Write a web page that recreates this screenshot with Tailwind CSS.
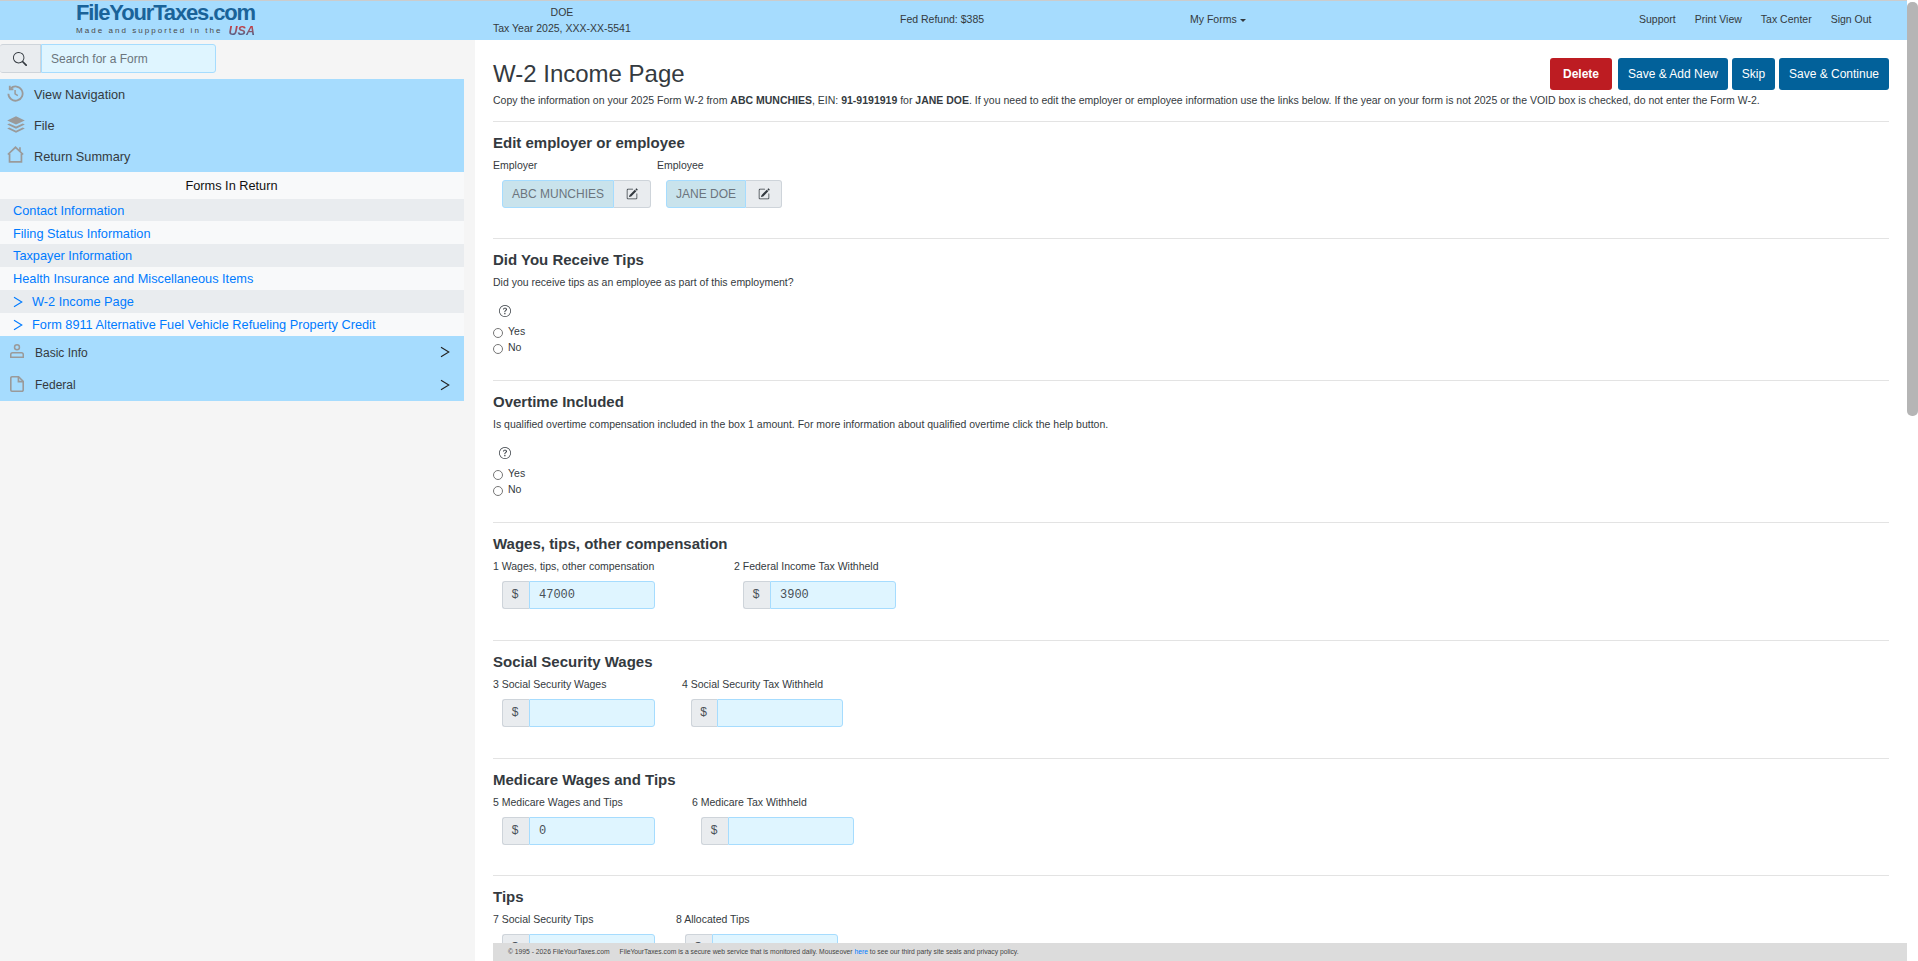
<!DOCTYPE html>
<html lang="en">
<head>
    <meta charset="UTF-8">
    <meta name="viewport" content="width=device-width, initial-scale=1.0">
    <title>W-2 Income Page - FileYourTaxes.com</title>
    <script src="https://cdn.jsdelivr.net/npm/@tailwindcss/browser@4"></script>
</head>
<body class="h-[961px] w-[1918px] overflow-hidden bg-white font-['Liberation_Sans',Arial,sans-serif] text-[#212529]">
<div class="relative flex h-full">
    <div class="flex w-[1907px] flex-col">
        <!-- top bar -->
        <header class="flex h-10 shrink-0 items-center border-t border-[#cccccc] bg-[#a6dcfe] text-[10.5px] text-[#343a40]">
            <div class="-mt-0.5 w-[493px] shrink-0 pl-[76px]">
                <div class="h-[22px] w-[180px] text-[22px] leading-[22px] font-bold tracking-[-1.15px] whitespace-nowrap text-[#1a6399]">FileYourTaxes.com</div>
                <div class="mt-px flex h-[12px] w-[180px] items-center justify-between text-[8px] leading-[12px] tracking-[2.05px] whitespace-nowrap text-[#4a4a4a]">
                    <span>Made and supported in the</span>
                    <span class="bg-linear-to-b from-[#d4202c] to-[#1a5f96] bg-clip-text pr-px text-[12.5px] leading-[12px] font-bold tracking-normal text-transparent italic">USA</span>
                </div>
            </div>
            <div class="-mt-0.5 w-[407px] shrink-0">
                <div class="w-[138px] text-center leading-[16px]">DOE</div>
                <div class="leading-[16px] whitespace-nowrap">Tax Year 2025, XXX-XX-5541</div>
            </div>
            <div class="-mt-px w-[290px] shrink-0">Fed Refund: $385</div>
            <div class="-mt-px flex w-[449px] shrink-0 items-center gap-[3px]">My Forms <span class="mt-px h-0 w-0 border-x-[3px] border-t-[3px] border-x-transparent border-t-[#343a40]"></span></div>
            <nav class="-mt-px flex gap-[19px] whitespace-nowrap">
                <span>Support</span><span>Print View</span><span>Tax Center</span><span>Sign Out</span>
            </nav>
        </header>

        <div class="flex min-h-0 flex-1">
            <!-- sidebar -->
            <aside class="w-[475px] shrink-0 bg-[#f5f5f5] pr-[11px]">
                <div class="mt-1 flex h-[29px] w-[216px] text-xs">
                    <div class="flex w-[41px] items-center justify-center rounded-l-[3px] border border-l-0 border-[#ced4da] bg-[#e9ecef]">
                        <svg class="h-[14px] w-[14px] text-[#343a40]" viewBox="0 0 16 16" fill="currentColor"><path d="M11.742 10.344a6.5 6.5 0 1 0-1.397 1.398h-.001c.03.04.062.078.098.115l3.85 3.85a1 1 0 0 0 1.415-1.414l-3.85-3.85a1.007 1.007 0 0 0-.115-.1zM12 6.5a5.5 5.5 0 1 1-11 0 5.5 5.5 0 0 1 11 0z"/></svg>
                    </div>
                    <input type="text" placeholder="Search for a Form" class="w-[175px] rounded-r-[3px] border border-[#a6dcfe] bg-[#dff5ff] px-[9px] text-[12px] outline-none placeholder:text-[#6c757d]">
                </div>

                <div class="mt-1.5 bg-[#a6dcfe] text-[12.75px] text-[#343a40]">
                    <div class="flex h-[31px] items-center gap-[10px] pl-[7px]">
                        <svg class="-mt-0.5 h-[17px] w-[17px] text-[#9a9a9a]" viewBox="0 0 16 16" fill="none" stroke="currentColor" stroke-width="1.7"><path d="M3.4 3.2A6.7 6.7 0 1 1 1.3 8.2"/><path d="M2.6 .8v3.2h3.4"/><path d="M7.6 4.6V8.4l2.6 1.6" stroke-width="1.4"/></svg>
                        <span>View Navigation</span>
                    </div>
                    <div class="flex h-[31px] items-center gap-[9px] pl-[7px]">
                        <svg class="-mt-0.5 h-[18px] w-[18px] text-[#9a9a9a]" viewBox="0 0 18 18" fill="currentColor"><path d="M9 .2 17.8 4.4 9 8.6 .2 4.4z"/><path d="M2.2 7.4 9 10.6l6.8-3.2 2 1.1L9 12.7.2 8.5z"/><path d="M2.2 11.5 9 14.7l6.8-3.2 2 1.1L9 16.8.2 12.6z"/></svg>
                        <span>File</span>
                    </div>
                    <div class="flex h-[31px] items-center gap-[10px] pl-[7px]">
                        <svg class="-mt-1 h-[17px] w-[17px] text-[#9a9a9a]" viewBox="0 0 16 16" fill="none" stroke="currentColor" stroke-width="1.6"><path d="M.8 8 8 1.2 15.2 8"/><path d="M2.4 7v8h11.2V7"/><path d="M12.2 1.2v4"/></svg>
                        <span>Return Summary</span>
                    </div>
                </div>

                <div class="bg-[#f8f9fa] text-[12.75px] text-[#007bff]">
                    <div class="h-[27px] pr-px text-center leading-[27px] text-[#111]">Forms In Return</div>
                    <div class="h-[22px] bg-[#e9ecef] pl-[13px] leading-[23px]">Contact Information</div>
                    <div class="h-[23px] pl-[13px] leading-[25px]">Filing Status Information</div>
                    <div class="h-[23px] bg-[#e9ecef] pl-[13px] leading-[24px]">Taxpayer Information</div>
                    <div class="h-[23px] pl-[13px] leading-[23px]">Health Insurance and Miscellaneous Items</div>
                    <div class="flex h-[23px] items-center gap-[9px] bg-[#e9ecef] pl-[13px]">
                        <svg class="h-3 w-[10px]" viewBox="0 0 10 12" fill="none" stroke="currentColor" stroke-width="1.1"><path d="M1 1.2 8.8 6 1 10.8"/></svg>
                        <span>W-2 Income Page</span>
                    </div>
                    <div class="flex h-[23px] items-center gap-[9px] pl-[13px]">
                        <svg class="h-3 w-[10px]" viewBox="0 0 10 12" fill="none" stroke="currentColor" stroke-width="1.1"><path d="M1 1.2 8.8 6 1 10.8"/></svg>
                        <span>Form 8911 Alternative Fuel Vehicle Refueling Property Credit</span>
                    </div>
                </div>

                <div class="bg-[#a6dcfe] text-xs text-[#343a40]">
                    <div class="flex h-[32px] items-center pr-[14px] pl-[10px]">
                        <svg class="-mt-0.5 h-[14px] w-[14px] text-[#9a9a9a]" viewBox="0 0 14 14" fill="currentColor"><path d="M7 0a3.2 3.2 0 1 1 0 6.4A3.2 3.2 0 0 1 7 0zm0 1.5a1.7 1.7 0 1 0 0 3.4 1.7 1.7 0 0 0 0-3.4z"/><path d="M2.5 8h9A2.5 2.5 0 0 1 14 10.5V14H0v-3.5A2.5 2.5 0 0 1 2.5 8zm0 1.5a1 1 0 0 0-1 1v2h11v-2a1 1 0 0 0-1-1z"/></svg>
                        <span class="ml-[11px] flex-1 pt-px">Basic Info</span>
                        <svg class="h-3 w-[10px] text-[#222]" viewBox="0 0 10 12" fill="none" stroke="currentColor" stroke-width="1.1"><path d="M1 1.2 8.8 6 1 10.8"/></svg>
                    </div>
                    <div class="flex h-[33px] items-center pr-[14px] pl-[10px]">
                        <svg class="-mt-0.5 h-4 w-[14px] text-[#9a9a9a]" viewBox="0 0 14 16" fill="none" stroke="currentColor" stroke-width="1.6"><path d="M2 .8h6.6L13.2 5.4V14a1.2 1.2 0 0 1-1.2 1.2H2A1.2 1.2 0 0 1 .8 14V2A1.2 1.2 0 0 1 2 .8z"/><path d="M8.4 1v4.6h4.6"/></svg>
                        <span class="ml-[11px] flex-1">Federal</span>
                        <svg class="h-3 w-[10px] text-[#222]" viewBox="0 0 10 12" fill="none" stroke="currentColor" stroke-width="1.1"><path d="M1 1.2 8.8 6 1 10.8"/></svg>
                    </div>
                </div>
            </aside>

            <!-- main form -->
            <main class="w-[1414px] pl-[18px] text-[10.5px] text-[#343a40]">
                <div class="mt-[18px] flex h-8 items-center justify-between">
                    <h1 class="text-[24px] leading-8 text-[#343a40]">W-2 Income Page</h1>
                    <div class="flex text-xs text-white">
                        <button class="flex h-8 w-[62px] items-center justify-center rounded-[3px] bg-[#bd1c22] font-bold">Delete</button>
                        <button class="ml-1.5 flex h-8 w-[110px] items-center justify-center rounded-[3px] bg-[#02619a]">Save &amp; Add New</button>
                        <button class="ml-1 flex h-8 w-[43px] items-center justify-center rounded-[3px] bg-[#02619a]">Skip</button>
                        <button class="ml-1 flex h-8 w-[110px] items-center justify-center rounded-[3px] bg-[#02619a]">Save &amp; Continue</button>
                    </div>
                </div>
                <p class="mt-px h-[30px] pt-px leading-[17px] whitespace-nowrap">Copy the information on your 2025 Form W-2 from <b>ABC MUNCHIES</b>, EIN: <b>91-9191919</b> for <b>JANE DOE</b>. If you need to edit the employer or employee information use the links below. If the year on your form is not 2025 or the VOID box is checked, do not enter the Form W-2.</p>

                <section class="h-[117px] border-t border-[#e3e3e3] pt-[11px]">
                    <h2 class="h-5 text-[15px] leading-5 font-bold">Edit employer or employee</h2>
                    <div class="mt-1 flex h-4 leading-4"><span class="w-[164px]">Employer</span><span>Employee</span></div>
                    <div class="mt-[7px] ml-[9px] flex text-xs">
                        <div class="flex h-7 w-[112px] items-center justify-center rounded-l-[3px] border border-[#a6dcfe] bg-[#c9e3ec] text-[#6c757d]">ABC MUNCHIES</div>
                        <div class="flex h-7 w-[37px] items-center justify-center rounded-r-[3px] border border-l-0 border-[#ced4da] bg-[#e9ecef]">
                            <svg class="h-3 w-3" viewBox="0 0 16 16" fill="currentColor"><path d="M15.502 1.94a.5.5 0 0 1 0 .706L14.459 3.69l-2-2L13.502.646a.5.5 0 0 1 .707 0l1.293 1.293zm-1.75 2.456-2-2L4.939 9.21a.5.5 0 0 0-.121.196l-.805 2.414a.25.25 0 0 0 .316.316l2.414-.805a.5.5 0 0 0 .196-.12l6.813-6.814z"/><path d="M1 13.5A1.5 1.5 0 0 0 2.5 15h11a1.5 1.5 0 0 0 1.5-1.5v-6a.5.5 0 0 0-1 0v6a.5.5 0 0 1-.5.5h-11a.5.5 0 0 1-.5-.5v-11a.5.5 0 0 1 .5-.5H9a.5.5 0 0 0 0-1H2.5A1.5 1.5 0 0 0 1 2.5v11z"/></svg>
                        </div>
                        <div class="ml-[15px] flex h-7 w-[80px] items-center justify-center rounded-l-[3px] border border-[#a6dcfe] bg-[#c9e3ec] text-[#6c757d]">JANE DOE</div>
                        <div class="flex h-7 w-[36px] items-center justify-center rounded-r-[3px] border border-l-0 border-[#ced4da] bg-[#e9ecef]">
                            <svg class="h-3 w-3" viewBox="0 0 16 16" fill="currentColor"><path d="M15.502 1.94a.5.5 0 0 1 0 .706L14.459 3.69l-2-2L13.502.646a.5.5 0 0 1 .707 0l1.293 1.293zm-1.75 2.456-2-2L4.939 9.21a.5.5 0 0 0-.121.196l-.805 2.414a.25.25 0 0 0 .316.316l2.414-.805a.5.5 0 0 0 .196-.12l6.813-6.814z"/><path d="M1 13.5A1.5 1.5 0 0 0 2.5 15h11a1.5 1.5 0 0 0 1.5-1.5v-6a.5.5 0 0 0-1 0v6a.5.5 0 0 1-.5.5h-11a.5.5 0 0 1-.5-.5v-11a.5.5 0 0 1 .5-.5H9a.5.5 0 0 0 0-1H2.5A1.5 1.5 0 0 0 1 2.5v11z"/></svg>
                        </div>
                    </div>
                </section>

                <section class="h-[142px] border-t border-[#e3e3e3] pt-[11px]">
                    <h2 class="h-5 text-[15px] leading-5 font-bold">Did You Receive Tips</h2>
                    <p class="mt-1 h-4 leading-4">Did you receive tips as an employee as part of this employment?</p>
                    <svg class="mt-[15px] ml-1.5 h-3 w-3" viewBox="0 0 16 16" fill="currentColor"><path d="M8 15A7 7 0 1 1 8 1a7 7 0 0 1 0 14zm0 1A8 8 0 1 0 8 0a8 8 0 0 0 0 16z"/><path d="M5.255 5.786a.237.237 0 0 0 .241.247h.825c.138 0 .248-.113.266-.25.09-.656.54-1.134 1.342-1.134.686 0 1.314.343 1.314 1.168 0 .635-.374.927-.965 1.371-.673.489-1.206 1.06-1.168 1.987l.003.217a.25.25 0 0 0 .25.246h.811a.25.25 0 0 0 .25-.25v-.105c0-.718.273-.927 1.01-1.486.609-.463 1.244-.977 1.244-2.056 0-1.511-1.276-2.241-2.673-2.241-1.267 0-2.655.59-2.75 2.286zm1.557 5.763c0 .533.425.927 1.01.927.609 0 1.028-.394 1.028-.927 0-.552-.42-.94-1.029-.94-.584 0-1.009.388-1.009.94z"/></svg>
                    <div class="mt-[7px] flex h-[15.5px] items-center gap-[5px]"><span class="mt-0.5 h-2.5 w-2.5 rounded-full border border-[#767676] bg-white"></span><span class="pt-px">Yes</span></div>
                    <div class="flex h-[15.5px] items-center gap-[5px]"><span class="mt-[3px] h-2.5 w-2.5 rounded-full border border-[#767676] bg-white"></span><span class="pt-px">No</span></div>
                </section>

                <section class="h-[142px] border-t border-[#e3e3e3] pt-[11px]">
                    <h2 class="h-5 text-[15px] leading-5 font-bold">Overtime Included</h2>
                    <p class="mt-1 h-4 leading-4">Is qualified overtime compensation included in the box 1 amount. For more information about qualified overtime click the help button.</p>
                    <svg class="mt-[15px] ml-1.5 h-3 w-3" viewBox="0 0 16 16" fill="currentColor"><path d="M8 15A7 7 0 1 1 8 1a7 7 0 0 1 0 14zm0 1A8 8 0 1 0 8 0a8 8 0 0 0 0 16z"/><path d="M5.255 5.786a.237.237 0 0 0 .241.247h.825c.138 0 .248-.113.266-.25.09-.656.54-1.134 1.342-1.134.686 0 1.314.343 1.314 1.168 0 .635-.374.927-.965 1.371-.673.489-1.206 1.06-1.168 1.987l.003.217a.25.25 0 0 0 .25.246h.811a.25.25 0 0 0 .25-.25v-.105c0-.718.273-.927 1.01-1.486.609-.463 1.244-.977 1.244-2.056 0-1.511-1.276-2.241-2.673-2.241-1.267 0-2.655.59-2.75 2.286zm1.557 5.763c0 .533.425.927 1.01.927.609 0 1.028-.394 1.028-.927 0-.552-.42-.94-1.029-.94-.584 0-1.009.388-1.009.94z"/></svg>
                    <div class="mt-[7px] flex h-[15.5px] items-center gap-[5px]"><span class="mt-0.5 h-2.5 w-2.5 rounded-full border border-[#767676] bg-white"></span><span class="pt-px">Yes</span></div>
                    <div class="flex h-[15.5px] items-center gap-[5px]"><span class="mt-[3px] h-2.5 w-2.5 rounded-full border border-[#767676] bg-white"></span><span class="pt-px">No</span></div>
                </section>

                <section class="h-[118px] border-t border-[#e3e3e3] pt-[11px]">
                    <h2 class="h-5 text-[15px] leading-5 font-bold">Wages, tips, other compensation</h2>
                    <div class="flex">
                        <div class="w-[241px]">
                            <div class="mt-1 h-4 leading-4">1 Wages, tips, other compensation</div>
                            <div class="mt-[7px] ml-[9px] flex h-7 w-[153px] font-['Liberation_Mono',monospace] text-xs">
                                <span class="flex w-[27px] items-center justify-center rounded-l-[3px] border border-r-0 border-[#ced4da] bg-[#e9ecef] pr-0.5 text-[#495057]">$</span>
                                <span class="flex-1 rounded-r-[3px] border border-[#a6dcfe] bg-[#dff5ff] pl-[9px] leading-[27px] text-[#495057]">47000</span>
                            </div>
                        </div>
                        <div>
                            <div class="mt-1 h-4 leading-4">2 Federal Income Tax Withheld</div>
                            <div class="mt-[7px] ml-[9px] flex h-7 w-[153px] font-['Liberation_Mono',monospace] text-xs">
                                <span class="flex w-[27px] items-center justify-center rounded-l-[3px] border border-r-0 border-[#ced4da] bg-[#e9ecef] pr-0.5 text-[#495057]">$</span>
                                <span class="flex-1 rounded-r-[3px] border border-[#a6dcfe] bg-[#dff5ff] pl-[9px] leading-[27px] text-[#495057]">3900</span>
                            </div>
                        </div>
                    </div>
                </section>

                <section class="h-[118px] border-t border-[#e3e3e3] pt-[11px]">
                    <h2 class="h-5 text-[15px] leading-5 font-bold">Social Security Wages</h2>
                    <div class="flex">
                        <div class="w-[189px]">
                            <div class="mt-1 h-4 leading-4">3 Social Security Wages</div>
                            <div class="mt-[7px] ml-[9px] flex h-7 w-[153px] font-['Liberation_Mono',monospace] text-xs">
                                <span class="flex w-[27px] items-center justify-center rounded-l-[3px] border border-r-0 border-[#ced4da] bg-[#e9ecef] pr-0.5 text-[#495057]">$</span>
                                <span class="flex-1 rounded-r-[3px] border border-[#a6dcfe] bg-[#dff5ff]"></span>
                            </div>
                        </div>
                        <div>
                            <div class="mt-1 h-4 leading-4">4 Social Security Tax Withheld</div>
                            <div class="mt-[7px] ml-[9px] flex h-7 w-[152px] font-['Liberation_Mono',monospace] text-xs">
                                <span class="flex w-[26px] items-center justify-center rounded-l-[3px] border border-r-0 border-[#ced4da] bg-[#e9ecef] pr-0.5 text-[#495057]">$</span>
                                <span class="flex-1 rounded-r-[3px] border border-[#a6dcfe] bg-[#dff5ff]"></span>
                            </div>
                        </div>
                    </div>
                </section>

                <section class="h-[117px] border-t border-[#e3e3e3] pt-[11px]">
                    <h2 class="h-5 text-[15px] leading-5 font-bold">Medicare Wages and Tips</h2>
                    <div class="flex">
                        <div class="w-[199px]">
                            <div class="mt-1 h-4 leading-4">5 Medicare Wages and Tips</div>
                            <div class="mt-[7px] ml-[9px] flex h-7 w-[153px] font-['Liberation_Mono',monospace] text-xs">
                                <span class="flex w-[27px] items-center justify-center rounded-l-[3px] border border-r-0 border-[#ced4da] bg-[#e9ecef] pr-0.5 text-[#495057]">$</span>
                                <span class="flex-1 rounded-r-[3px] border border-[#a6dcfe] bg-[#dff5ff] pl-[9px] leading-[27px] text-[#495057]">0</span>
                            </div>
                        </div>
                        <div>
                            <div class="mt-1 h-4 leading-4">6 Medicare Tax Withheld</div>
                            <div class="mt-[7px] ml-[9px] flex h-7 w-[153px] font-['Liberation_Mono',monospace] text-xs">
                                <span class="flex w-[27px] items-center justify-center rounded-l-[3px] border border-r-0 border-[#ced4da] bg-[#e9ecef] pr-0.5 text-[#495057]">$</span>
                                <span class="flex-1 rounded-r-[3px] border border-[#a6dcfe] bg-[#dff5ff]"></span>
                            </div>
                        </div>
                    </div>
                </section>

                <section class="h-[118px] border-t border-[#e3e3e3] pt-[11px]">
                    <h2 class="h-5 text-[15px] leading-5 font-bold">Tips</h2>
                    <div class="flex">
                        <div class="w-[183px]">
                            <div class="mt-1 h-4 leading-4">7 Social Security Tips</div>
                            <div class="mt-[7px] ml-[9px] flex h-7 w-[153px] font-['Liberation_Mono',monospace] text-xs">
                                <span class="flex w-[27px] items-center justify-center rounded-l-[3px] border border-r-0 border-[#ced4da] bg-[#e9ecef] pr-0.5 text-[#495057]">$</span>
                                <span class="flex-1 rounded-r-[3px] border border-[#a6dcfe] bg-[#dff5ff]"></span>
                            </div>
                        </div>
                        <div>
                            <div class="mt-1 h-4 leading-4">8 Allocated Tips</div>
                            <div class="mt-[7px] ml-[9px] flex h-7 w-[153px] font-['Liberation_Mono',monospace] text-xs">
                                <span class="flex w-[27px] items-center justify-center rounded-l-[3px] border border-r-0 border-[#ced4da] bg-[#e9ecef] pr-0.5 text-[#495057]">$</span>
                                <span class="flex-1 rounded-r-[3px] border border-[#a6dcfe] bg-[#dff5ff]"></span>
                            </div>
                        </div>
                    </div>
                </section>
            </main>
        </div>
    </div>

    <!-- scrollbar -->
    <div class="w-[11px] shrink-0 pt-0.5">
        <div class="h-[414px] rounded-[5px] bg-[#b5b5b5]"></div>
    </div>

    <!-- fixed footer -->
    <footer class="absolute right-[11px] bottom-0 left-[493px] flex h-[18px] items-center gap-[10px] bg-[#dcdcdc] pl-[15px] text-[6.75px] whitespace-nowrap text-[#444]">
        <span>© 1995 - 2026 FileYourTaxes.com</span>
        <span>FileYourTaxes.com is a secure web service that is monitored daily. Mouseover <span class="text-[#007bff]">here</span> to see our third party site seals and privacy policy.</span>
    </footer>
</div>
</body>
</html>
